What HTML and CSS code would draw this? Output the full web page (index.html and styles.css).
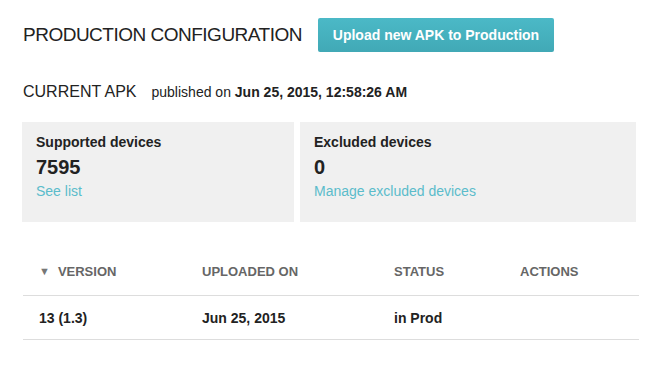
FILE: index.html
```html
<!DOCTYPE html>
<html lang="en">
<head>
  <meta charset="UTF-8" />
  <title>Production configuration</title>
  <link rel="stylesheet" href="styles.css">
</head>
<body>
  <div class="page">
    <div class="title-row">
      <h1>PRODUCTION CONFIGURATION</h1>
      <button class="upload">Upload new APK to Production</button>
    </div>

    <div class="current">
      <h2>CURRENT APK</h2>
      <span class="published">published on <b>Jun 25, 2015, 12:58:26 AM</b></span>
    </div>

    <div class="cards">
      <div class="card supported">
        <div class="card-label">Supported devices</div>
        <div class="card-count">7595</div>
        <a href="#" class="card-link">See list</a>
      </div>
      <div class="card excluded">
        <div class="card-label">Excluded devices</div>
        <div class="card-count">0</div>
        <a href="#" class="card-link">Manage excluded devices</a>
      </div>
    </div>

    <table class="apks">
      <thead>
        <tr>
          <th class="col-version"><span class="sort">&#9660;</span>VERSION</th>
          <th class="col-uploaded">UPLOADED ON</th>
          <th class="col-status">STATUS</th>
          <th class="col-actions">ACTIONS</th>
        </tr>
      </thead>
      <tbody>
        <tr>
          <td>13 (1.3)</td>
          <td>Jun 25, 2015</td>
          <td>in Prod</td>
          <td></td>
        </tr>
      </tbody>
    </table>
  </div>
</body>
</html>
```

FILE: styles.css
```css
body {
  margin: 0;
  font-family: "Liberation Sans", Arial, sans-serif;
  background: #fff;
  color: #222;
}
.page {
  padding: 18px 14px 0 23px;
}
.title-row {
  display: flex;
  align-items: center;
  height: 34px;
}
h1 {
  margin: 0;
  font-size: 19px;
  font-weight: normal;
  letter-spacing: -0.5px;
  color: #222;
}
.upload {
  margin-left: 16px;
  height: 34px;
  width: 236px;
  padding: 0;
  border: none;
  border-radius: 2px;
  background: linear-gradient(#4bb9c7, #41a9b6);
  color: #fff;
  font-family: inherit;
  font-size: 14px;
  font-weight: bold;
}
.current {
  display: flex;
  align-items: baseline;
  margin-top: 31px;
}
h2 {
  margin: 0;
  font-size: 16px;
  font-weight: normal;
  color: #222;
}
.published {
  margin-left: 15px;
  font-size: 14px;
}
.cards {
  display: flex;
  gap: 6px;
  margin-top: 21px;
  margin-left: -1px;
}
.card {
  background: #f0f0f0;
  height: 100px;
  box-sizing: border-box;
  padding: 12px 14px;
}
.supported {
  width: 272px;
}
.excluded {
  width: 336px;
}
.card-label {
  font-size: 14px;
  font-weight: bold;
  color: #222;
}
.card-count {
  font-size: 20px;
  font-weight: bold;
  margin-top: 6px;
}
.card-link {
  display: block;
  margin-top: 4px;
  font-size: 14px;
  color: #5bbccb;
  text-decoration: none;
}
.apks {
  margin-top: 25px;
  width: 616px;
  border-collapse: collapse;
}
.apks th {
  text-align: left;
  font-size: 13px;
  font-weight: bold;
  color: #666;
  height: 48px;
  padding: 0;
  border-bottom: 1px solid #ddd;
}
.apks td {
  font-size: 14px;
  font-weight: bold;
  height: 43px;
  padding: 0;
  border-bottom: 1px solid #ddd;
}
.apks th:first-child,
.apks td:first-child {
  padding-left: 16px;
}
.col-version {
  width: 163px;
}
.col-uploaded {
  width: 192px;
}
.col-status {
  width: 126px;
}
.sort {
  font-size: 11px;
  color: #777;
  margin-right: 8px;
  vertical-align: 1px;
}
```
